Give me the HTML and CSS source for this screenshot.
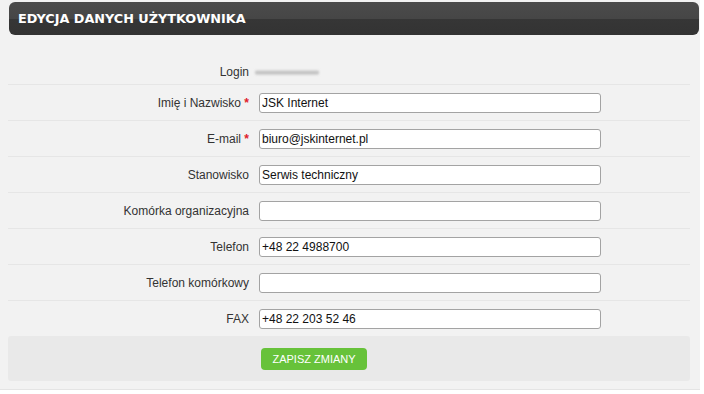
FILE: index.html
```html
<!DOCTYPE html>
<html lang="pl">
<head>
  <meta charset="UTF-8">
  <title>Edycja danych użytkownika</title>
  <link rel="stylesheet" href="styles.css">
</head>
<body>
  <div class="panel">
    <!-- Header -->
    <div class="panel-head">
      <h1>EDYCJA DANYCH UŻYTKOWNIKA</h1>
    </div>
    <!-- Form -->
    <form class="user-form">
      <div class="row row-login">
        <label>Login</label>
        <div class="field"><span class="blurred"></span></div>
      </div>
      <div class="row">
        <label>Imię i Nazwisko <span class="req">*</span></label>
        <div class="field"><input type="text" value="JSK Internet"></div>
      </div>
      <div class="row">
        <label>E-mail <span class="req">*</span></label>
        <div class="field"><input type="text" value="biuro@jskinternet.pl"></div>
      </div>
      <div class="row">
        <label>Stanowisko</label>
        <div class="field"><input type="text" value="Serwis techniczny"></div>
      </div>
      <div class="row">
        <label>Komórka organizacyjna</label>
        <div class="field"><input type="text" value=""></div>
      </div>
      <div class="row">
        <label>Telefon</label>
        <div class="field"><input type="text" value="+48 22 4988700"></div>
      </div>
      <div class="row">
        <label>Telefon komórkowy</label>
        <div class="field"><input type="text" value=""></div>
      </div>
      <div class="row row-last">
        <label>FAX</label>
        <div class="field"><input type="text" value="+48 22 203 52 46"></div>
      </div>
      <div class="actions">
        <button type="button" class="save-btn">ZAPISZ ZMIANY</button>
      </div>
    </form>
  </div>
</body>
</html>
```
FILE: styles.css
```css
/* General */
body {
  margin: 0;
  background: #ffffff;
  font-family: 'Liberation Sans', Arial, sans-serif;
  font-size: 12px;
  color: #333;
}
.panel {
  width: 700px;
  height: 390px;
  background: #f2f2f2;
  border-bottom: 1px solid #e4e4e4;
  box-sizing: border-box;
  padding-top: 2px;
}
/* Header */
.panel-head {
  margin-left: 9px;
  width: 690px;
  height: 33px;
  border-radius: 6px;
  background: linear-gradient(to bottom, #4b4b4b 0%, #464646 50%, #363636 52%, #333333 100%);
  display: flex;
  align-items: center;
}
.panel-head h1 {
  margin: 0 0 0 9px;
  font-family: 'DejaVu Sans', Verdana, sans-serif;
  font-size: 12.8px;
  font-weight: bold;
  color: #ffffff;
}
/* Form rows */
.user-form {
  margin: 19px 10px 0 8px;
}
.row {
  display: flex;
  align-items: center;
  height: 35px;
  border-bottom: 1px solid #e6e6e6;
}
.row-login {
  height: 31px;
  padding-top: 6px;
  box-sizing: border-box;
}
.row-last {
  border-bottom: none;
}
.row label {
  width: 241px;
  text-align: right;
  color: #333;
}
.req {
  color: #e0202a;
  font-weight: bold;
}
.field {
  margin-left: 10px;
  display: flex;
  align-items: center;
}
.field input {
  width: 342px;
  height: 20px;
  box-sizing: border-box;
  border: 1px solid #a3a3a3;
  border-radius: 3px;
  padding: 1px 2px;
  font-family: 'Liberation Sans', Arial, sans-serif;
  font-size: 12px;
  color: #111;
  background: #fff;
}
.blurred {
  display: block;
  width: 64px;
  height: 5px;
  margin-left: -4px;
  background: linear-gradient(to bottom, #e0e0e0, #bdbdbd 50%, #d8d8d8);
  border-radius: 2px;
  filter: blur(1px);
}
/* Button area */
.actions {
  background: #e9e9e9;
  height: 45px;
  border-radius: 3px;
  display: flex;
  align-items: center;
  padding-left: 253px;
}
.save-btn {
  background: #67c23a;
  color: #ffffff;
  border: none;
  border-radius: 4px;
  width: 106px;
  height: 22px;
  font-family: 'Liberation Sans', Arial, sans-serif;
  font-size: 11px;
  padding: 0;
  cursor: pointer;
}
```
